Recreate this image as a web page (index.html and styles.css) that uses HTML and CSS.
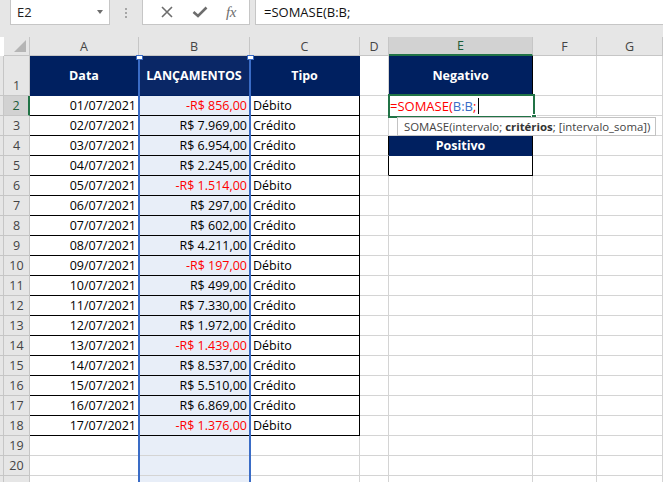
FILE: index.html
```html
<!DOCTYPE html>
<html lang="pt-BR">
<head>
<meta charset="utf-8">
<title>SOMASE</title>
<link rel="stylesheet" href="styles.css">
</head>
<body>
<div class="fbar">
  <div class="namebox"><span>E2</span><span class="dd"></span></div>
  <div class="dots"><i></i><i></i><i></i></div>
  <div class="btns">
    <svg class="ico" width="14" height="14" viewBox="0 0 14 14"><path d="M2 2 L12 12 M12 2 L2 12" stroke="#6d6d6d" stroke-width="1.6" fill="none"/></svg>
    <svg class="ico" width="16" height="14" viewBox="0 0 16 14"><path d="M1.5 7 L6 11 L14.5 2.5" stroke="#6d6d6d" stroke-width="2.6" fill="none"/></svg>
    <span class="fx">fx</span>
  </div>
  <div class="finput">=SOMASE(B:B;</div>
</div>

<div class="sheet">
  <div class="corner"><span class="tri"></span></div>
  <div class="ch">A</div><div class="ch">B</div><div class="ch">C</div><div class="ch">D</div><div class="ch chsel">E</div><div class="ch">F</div><div class="ch">G</div>

  <div class="rh rtall">1</div>
  <div class="c hd">Data</div><div class="c hd hdb">LANÇAMENTOS</div><div class="c hd">Tipo</div><div class="c"></div><div class="c hd hde">Negativo</div><div class="c"></div><div class="c"></div>

  <div class="rh rhsel">2</div>
  <div class="c t r">01/07/2021</div><div class="c t r sel neg">-R$ 856,00</div><div class="c t">Débito</div><div class="c"></div><div class="c"></div><div class="c"></div><div class="c"></div>

  <div class="rh">3</div>
  <div class="c t r">02/07/2021</div><div class="c t r sel">R$ 7.969,00</div><div class="c t">Crédito</div><div class="c"></div><div class="c"></div><div class="c"></div><div class="c"></div>

  <div class="rh">4</div>
  <div class="c t r">03/07/2021</div><div class="c t r sel">R$ 6.954,00</div><div class="c t">Crédito</div><div class="c dk"></div><div class="c hd hde">Positivo</div><div class="c"></div><div class="c"></div>

  <div class="rh">5</div>
  <div class="c t r">04/07/2021</div><div class="c t r sel">R$ 2.245,00</div><div class="c t">Crédito</div><div class="c dk"></div><div class="c t"></div><div class="c"></div><div class="c"></div>

  <div class="rh">6</div>
  <div class="c t r">05/07/2021</div><div class="c t r sel neg">-R$ 1.514,00</div><div class="c t">Débito</div><div class="c"></div><div class="c"></div><div class="c"></div><div class="c"></div>

  <div class="rh">7</div>
  <div class="c t r">06/07/2021</div><div class="c t r sel">R$ 297,00</div><div class="c t">Crédito</div><div class="c"></div><div class="c"></div><div class="c"></div><div class="c"></div>

  <div class="rh">8</div>
  <div class="c t r">07/07/2021</div><div class="c t r sel">R$ 602,00</div><div class="c t">Crédito</div><div class="c"></div><div class="c"></div><div class="c"></div><div class="c"></div>

  <div class="rh">9</div>
  <div class="c t r">08/07/2021</div><div class="c t r sel">R$ 4.211,00</div><div class="c t">Crédito</div><div class="c"></div><div class="c"></div><div class="c"></div><div class="c"></div>

  <div class="rh">10</div>
  <div class="c t r">09/07/2021</div><div class="c t r sel neg">-R$ 197,00</div><div class="c t">Débito</div><div class="c"></div><div class="c"></div><div class="c"></div><div class="c"></div>

  <div class="rh">11</div>
  <div class="c t r">10/07/2021</div><div class="c t r sel">R$ 499,00</div><div class="c t">Crédito</div><div class="c"></div><div class="c"></div><div class="c"></div><div class="c"></div>

  <div class="rh">12</div>
  <div class="c t r">11/07/2021</div><div class="c t r sel">R$ 7.330,00</div><div class="c t">Crédito</div><div class="c"></div><div class="c"></div><div class="c"></div><div class="c"></div>

  <div class="rh">13</div>
  <div class="c t r">12/07/2021</div><div class="c t r sel">R$ 1.972,00</div><div class="c t">Crédito</div><div class="c"></div><div class="c"></div><div class="c"></div><div class="c"></div>

  <div class="rh">14</div>
  <div class="c t r">13/07/2021</div><div class="c t r sel neg">-R$ 1.439,00</div><div class="c t">Débito</div><div class="c"></div><div class="c"></div><div class="c"></div><div class="c"></div>

  <div class="rh">15</div>
  <div class="c t r">14/07/2021</div><div class="c t r sel">R$ 8.537,00</div><div class="c t">Crédito</div><div class="c"></div><div class="c"></div><div class="c"></div><div class="c"></div>

  <div class="rh">16</div>
  <div class="c t r">15/07/2021</div><div class="c t r sel">R$ 5.510,00</div><div class="c t">Crédito</div><div class="c"></div><div class="c"></div><div class="c"></div><div class="c"></div>

  <div class="rh">17</div>
  <div class="c t r">16/07/2021</div><div class="c t r sel">R$ 6.869,00</div><div class="c t">Crédito</div><div class="c"></div><div class="c"></div><div class="c"></div><div class="c"></div>

  <div class="rh">18</div>
  <div class="c t r">17/07/2021</div><div class="c t r sel neg">-R$ 1.376,00</div><div class="c t">Débito</div><div class="c"></div><div class="c"></div><div class="c"></div><div class="c"></div>

  <div class="rh">19</div>
  <div class="c"></div><div class="c sel"></div><div class="c"></div><div class="c"></div><div class="c"></div><div class="c"></div><div class="c"></div>

  <div class="rh">20</div>
  <div class="c"></div><div class="c sel"></div><div class="c"></div><div class="c"></div><div class="c"></div><div class="c"></div><div class="c"></div>

  <div class="rh"></div>
  <div class="c"></div><div class="c sel"></div><div class="c"></div><div class="c"></div><div class="c"></div><div class="c"></div><div class="c"></div>
</div>

<div class="refline refl"></div>
<div class="refline refr"></div>
<div class="handle hl"></div>
<div class="handle hr"></div>

<div class="active">
  <span class="fr">=SOMASE(</span><span class="fb">B:B</span><span class="fr">;</span><span class="caret"></span>
  <span class="fill"></span>
</div>

<div class="tip">SOMASE(intervalo; <b>critérios</b>; [intervalo_soma])</div>
</body>
</html>
```

FILE: styles.css
```css
* { box-sizing: border-box; }
html, body { margin: 0; padding: 0; }
body {
  width: 663px;
  height: 482px;
  overflow: hidden;
  position: relative;
  background: #ffffff;
  font-family: "Open Sans", "Liberation Sans", sans-serif;
  font-size: 12.5px;
  color: #000;
}

/* formula bar */
.fbar {
  height: 37px;
  background: #e6e6e6;
  display: flex;
  align-items: flex-start;
  padding-left: 10px;
}
.namebox {
  width: 100px;
  height: 26px;
  margin-top: -1px;
  background: #fff;
  border: 1px solid #c6c6c6;
  display: flex;
  align-items: center;
  justify-content: space-between;
  padding: 0 6px 0 6px;
  font-size: 13px;
  color: #222;
}
.dd {
  width: 0; height: 0;
  border-left: 3.5px solid transparent;
  border-right: 3.5px solid transparent;
  border-top: 4px solid #6d6d6d;
}
.dots {
  width: 32px;
  height: 25px;
  display: flex;
  flex-direction: column;
  align-items: center;
  justify-content: center;
  gap: 2px;
}
.dots i {
  display: block;
  width: 2px; height: 2px;
  background: #a6a6a6;
}
.btns {
  width: 108px;
  height: 26px;
  margin-top: -1px;
  background: #fff;
  border: 1px solid #c6c6c6;
  display: flex;
  align-items: center;
  justify-content: space-around;
  padding: 0 4px 0 8px;
}
.fx {
  font-family: "Liberation Serif", serif;
  font-style: italic;
  font-size: 15px;
  color: #6d6d6d;
  letter-spacing: -0.5px;
}
.finput {
  flex: 1;
  margin-left: 5px;
  height: 26px;
  margin-top: -1px;
  background: #fff;
  border: 1px solid #c6c6c6;
  border-right: none;
  padding-left: 8px;
  display: flex;
  align-items: center;
  font-size: 13px;
  color: #111;
}

/* sheet grid */
.sheet {
  display: grid;
  grid-template-columns: 30px 109px 111px 110px 29px 144px 64px 66px;
  grid-template-rows: 19px 40px repeat(20, 20px);
}
.corner, .ch, .rh {
  background: #e6e6e6;
  color: #444;
  border-right: 1px solid #c6c6c6;
  border-bottom: 1px solid #c6c6c6;
}
.corner {
  position: relative;
  margin-left: 4px;
}
.tri {
  position: absolute;
  right: 3px;
  bottom: 3px;
  width: 0; height: 0;
  border-left: 12px solid transparent;
  border-bottom: 12px solid #b5b5b5;
}
.ch {
  display: flex;
  align-items: center;
  justify-content: center;
  font-size: 12.5px;
}
.chsel {
  background: #d2d2d2;
  border-bottom: 2px solid #217346;
  color: #1d5e3a;
}
.rh {
  display: flex;
  align-items: flex-end;
  justify-content: center;
  padding-left: 4px;
  line-height: 18px;
  background: linear-gradient(to right, #e6e6e6 3px, #c6c6c6 3px, #c6c6c6 4px, #e6e6e6 4px);
}
.rhsel {
  background: linear-gradient(to right, #e6e6e6 3px, #c6c6c6 3px, #c6c6c6 4px, #d2d2d2 4px);
  border-right: 2px solid #217346;
  color: #1d5e3a;
}

.c {
  border-right: 1px solid #d4d4d4;
  border-bottom: 1px solid #d4d4d4;
  display: flex;
  align-items: flex-end;
  padding: 0 3px 0 3px;
  line-height: 18px;
  white-space: nowrap;
  overflow: hidden;
}
.t { border-color: #000; }
.dk { border-right-color: #000; }
.r { justify-content: flex-end; padding-right: 2px; }
.sel { background: #e8eef8; }
.neg { color: #ff0000; }
.hd {
  background: #002060;
  border-color: #002060;
  color: #fff;
  font-weight: 700;
  justify-content: center;
  align-items: center;
}
.hdb { background: #0a2766; }
.hde { border-right-color: #000; }

/* referenced range outline (column B) */
.refline {
  position: absolute;
  top: 56px;
  bottom: 0;
  width: 2px;
  background: #3a6cc6;
}
.refl { left: 138px; }
.refr { left: 249px; }
.handle {
  position: absolute;
  top: 55px;
  width: 7px;
  height: 5px;
  background: #fff;
  border: 1px solid #3a6cc6;
}
.hl { left: 136px; }
.hr { left: 247px; }

/* active cell E2 */
.active {
  position: absolute;
  left: 388px;
  top: 94px;
  width: 147px;
  height: 24px;
  border: 2px solid #217346;
  background: #fff;
  display: flex;
  align-items: flex-end;
  padding: 0 0 1px 0;
  font-size: 13px;
  line-height: 18px;
  white-space: nowrap;
}
.fr { color: #ff0000; }
.fb { color: #3a6cc6; }
.caret {
  display: inline-block;
  width: 1px;
  height: 16px;
  margin-left: 2px;
  margin-bottom: 1px;
  background: #000;
}
.fill {
  position: absolute;
  right: -4px;
  bottom: -4px;
  width: 6px;
  height: 6px;
  background: #217346;
  border: 1px solid #fff;
}

/* function tooltip */
.tip {
  position: absolute;
  left: 397px;
  top: 117px;
  width: 259px;
  height: 19px;
  background: #fff;
  border: 1px solid #c3c3c3;
  color: #444;
  font-size: 11.4px;
  line-height: 17px;
  padding-left: 6px;
  white-space: nowrap;
}
.tip b { font-weight: 700; color: #333; }
```
